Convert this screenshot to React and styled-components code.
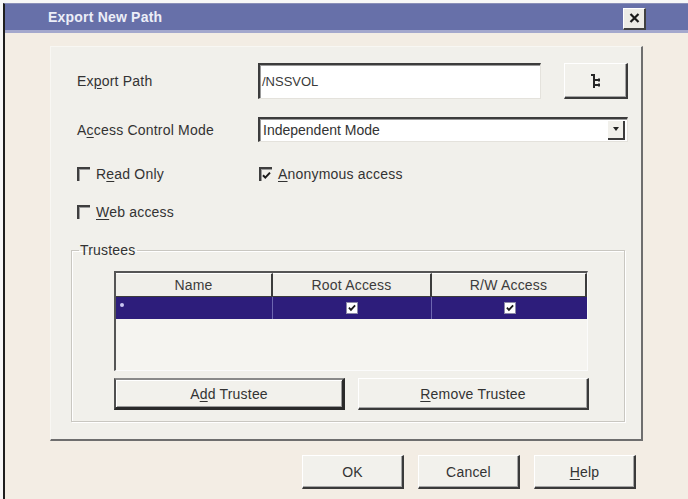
import React from "react";
import styled, { createGlobalStyle } from "styled-components";

const GlobalStyle = createGlobalStyle`
  html, body {
    margin: 0;
    padding: 0;
    background: #ffffff;
  }
  * {
    box-sizing: border-box;
  }
`;

const Screen = styled.div`
  width: 688px;
  height: 499px;
  padding: 3px 0 0 3px;
  background: #f7f7f7;
  font-family: "Liberation Sans", Arial, sans-serif;
  font-size: 14px;
  color: #333333;
  overflow: hidden;
`;

const Window = styled.div`
  height: 100%;
  display: flex;
  flex-direction: column;
  background: #f3ede4;
  border-left: 2px solid #1e1e1e;
  border-top: 1px solid #8a8fb8;
`;

const TitleBar = styled.div`
  height: 29px;
  flex: none;
  display: flex;
  align-items: center;
  justify-content: space-between;
  padding: 0 42px 0 43px;
  background: #6770a9;
  border-bottom: 3px solid #a4a8cd;
`;

const Title = styled.span`
  color: #eceef8;
  font-weight: bold;
  font-size: 14px;
  letter-spacing: 0.2px;
`;

const CloseButton = styled.div`
  width: 23px;
  height: 22px;
  margin-top: 3px;
  display: flex;
  align-items: center;
  justify-content: center;
  background: #ecebe6;
  border-top: 1px solid #ffffff;
  border-left: 1px solid #ffffff;
  border-right: 2px solid #404040;
  border-bottom: 2px solid #404040;
`;

const Body = styled.div`
  flex: 1;
  padding: 13px 0 0 45px;
`;

const Panel = styled.div`
  width: 593px;
  height: 395px;
  padding: 16px 0 0 20px;
  background: #f1f0eb;
  border-top: 1px solid #f8f7f3;
  border-left: 1px solid #f8f7f3;
  border-right: 2px solid #6e6e6e;
  border-bottom: 2px solid #6e6e6e;
`;

const FieldRow = styled.div`
  display: flex;
  align-items: center;
  height: ${({ h }) => h}px;
  margin: ${({ top }) => top}px 0 0 6px;
`;

const Label = styled.div`
  width: 181px;
  flex: none;
  letter-spacing: 0.2px;
`;

const Key = styled.span`
  text-decoration: underline;
  text-underline-offset: 2px;
`;

const Sunken = styled.div`
  height: 100%;
  display: flex;
  align-items: center;
  background: #ffffff;
  border-top: 2px solid #3c3c3c;
  border-left: 2px solid #3c3c3c;
  border-right: 1px solid #e4e2dc;
  border-bottom: 1px solid #e4e2dc;
  box-shadow: inset 1px 1px 0 #9a9a9a;
`;

const TextInput = styled(Sunken)`
  width: 283px;
  padding-left: 2px;
  font-size: 13px;
  color: #3a3a3a;
`;

const Select = styled(Sunken)`
  width: 370px;
  justify-content: space-between;
  padding: 0 2px 0 3px;
`;

const DropArrow = styled.div`
  width: 17px;
  height: 19px;
  display: flex;
  align-items: center;
  justify-content: center;
  background: #f1f0eb;
  border-right: 2px solid #3c3c3c;
  border-bottom: 2px solid #3c3c3c;
  &::after {
    content: "";
    border-left: 3px solid transparent;
    border-right: 3px solid transparent;
    border-top: 4px solid #222;
  }
`;

const Button = styled.button`
  width: ${({ w }) => w}px;
  height: ${({ h }) => h}px;
  margin-left: ${({ gapLeft }) => gapLeft || 0}px;
  flex: none;
  display: flex;
  align-items: center;
  justify-content: center;
  padding: 0;
  font-family: inherit;
  font-size: 14px;
  letter-spacing: 0.2px;
  color: #333333;
  background: #f2f1ec;
  border-top: 1px solid #ffffff;
  border-left: 1px solid #ffffff;
  border-right: 2px solid #3a3a3a;
  border-bottom: 2px solid #3a3a3a;
  box-shadow: inset -1px -1px 0 #a6a6a6;
  ${({ primary }) =>
    primary &&
    `
    border-top: 2px solid #8a8a8a;
    border-left: 2px solid #505050;
    border-right: 3px solid #2a2a2a;
    border-bottom: 3px solid #2a2a2a;
    box-shadow: inset 1px 1px 0 #ffffff, inset -1px -1px 0 #9a9a9a;
  `}
`;

const CheckRow = styled.div`
  display: flex;
  align-items: center;
  height: 20px;
  margin: ${({ top }) => top}px 0 0 6px;
`;

const CheckItem = styled.label`
  display: flex;
  align-items: center;
  gap: 6px;
  width: ${({ w }) => (w ? `${w}px` : "auto")};
  letter-spacing: 0.2px;
`;

const Box = styled.span`
  width: 13px;
  height: 14px;
  flex: none;
  display: flex;
  align-items: center;
  justify-content: center;
  border-top: 2px solid #3e3e3e;
  border-left: 2px solid #3e3e3e;
  box-shadow: inset 1px 1px 0 #9c9c9c;
`;

const Group = styled.fieldset`
  width: 554px;
  height: 180px;
  margin: 20px 0 0 0;
  padding: 0 0 0 42px;
  border: 1px solid #c9c7c1;
  box-shadow: 1px 1px 0 #ffffff, inset 1px 1px 0 #ffffff;
  min-inline-size: 0;
`;

const Legend = styled.legend`
  padding: 0 1px;
  margin-left: -35px;
  letter-spacing: 0.2px;
`;

const Table = styled.div`
  width: 474px;
  height: 100px;
  margin-top: 13px;
  background: #f5f4f0;
  border-top: 2px solid #555;
  border-left: 2px solid #555;
  border-right: 1px solid #fbfbfb;
  border-bottom: 1px solid #fbfbfb;
`;

const Grid = styled.div`
  display: grid;
  grid-template-columns: 157px 159px 1fr;
`;

const HeadCell = styled.div`
  height: 24px;
  display: flex;
  align-items: center;
  justify-content: center;
  background: #f0efea;
  border-top: 1px solid #ffffff;
  border-bottom: 1px solid #3c3c3c;
  border-right: 2px solid #3c3c3c;
  color: #3c3c3c;
  letter-spacing: 0.2px;
  &:last-child {
    border-right: none;
  }
`;

const RowCell = styled.div`
  height: 22px;
  display: flex;
  align-items: center;
  justify-content: ${({ left }) => (left ? "flex-start" : "center")};
  padding-left: ${({ left }) => (left ? "4px" : "0")};
  background: #2d1d7b;
  border-right: 1px solid #6d66b0;
  &:last-child {
    border-right: none;
  }
`;

const Marker = styled.span`
  width: 4px;
  height: 4px;
  border-radius: 50%;
  background: #c9c6f0;
  margin-top: -6px;
`;

const CellBox = styled.span`
  width: 12px;
  height: 12px;
  display: flex;
  align-items: center;
  justify-content: center;
  background: #ffffff;
  border: 1px solid #8d8aa8;
`;

const ButtonRow = styled.div`
  display: flex;
  gap: 13px;
  margin-top: 7px;
`;

const Footer = styled.div`
  width: 593px;
  display: flex;
  justify-content: flex-end;
  gap: 14px;
  padding-right: 7px;
  margin-top: 14px;
`;

const Check = ({ size = 9 }) => (
  <svg width={size} height={size} viewBox="0 0 9 9">
    <path d="M1 4.2 L3.3 6.6 L8 1.6" fill="none" stroke="#1a1a1a" strokeWidth="2" />
  </svg>
);

const CloseGlyph = () => (
  <svg width="11" height="10" viewBox="0 0 11 10">
    <path d="M1.5 1 L9.5 9 M9.5 1 L1.5 9" stroke="#1a1a1a" strokeWidth="2.2" />
  </svg>
);

// tree glyph on the browse button: trunk with a hook on top and two branches
const BrowseGlyph = () => (
  <svg width="14" height="18" viewBox="0 0 14 18">
    <path
      d="M5 2 V16 M2 3 H5 M5 8 H11 M5 13 H11 M10 6.5 V9.5 M10 11.5 V14.5"
      fill="none"
      stroke="#262626"
      strokeWidth="2"
    />
  </svg>
);

export default function App() {
  return (
    <>
      <GlobalStyle />
      <Screen>
        <Window>
          <TitleBar>
            <Title>Export New Path</Title>
            <CloseButton>
              <CloseGlyph />
            </CloseButton>
          </TitleBar>
          <Body>
            <Panel>
              <FieldRow h={36} top={0}>
                <Label>
                  Ex<Key>p</Key>ort Path
                </Label>
                <TextInput>/NSSVOL</TextInput>
                <Button w={64} h={36} gapLeft={23}>
                  <BrowseGlyph />
                </Button>
              </FieldRow>
              <FieldRow h={25} top={18}>
                <Label>
                  A<Key>c</Key>cess Control Mode
                </Label>
                <Select>
                  <span>Independent Mode</span>
                  <DropArrow />
                </Select>
              </FieldRow>
              <CheckRow top={22}>
                <CheckItem w={182}>
                  <Box />
                  <span>
                    R<Key>e</Key>ad Only
                  </span>
                </CheckItem>
                <CheckItem>
                  <Box>
                    <Check />
                  </Box>
                  <span>
                    <Key>A</Key>nonymous access
                  </span>
                </CheckItem>
              </CheckRow>
              <CheckRow top={18}>
                <CheckItem>
                  <Box />
                  <span>
                    <Key>W</Key>eb access
                  </span>
                </CheckItem>
              </CheckRow>
              <Group>
                <Legend>Trustees</Legend>
                <Table>
                  <Grid>
                    <HeadCell>Name</HeadCell>
                    <HeadCell>Root Access</HeadCell>
                    <HeadCell>R/W Access</HeadCell>
                    <RowCell left>
                      <Marker />
                    </RowCell>
                    <RowCell>
                      <CellBox>
                        <Check size={8} />
                      </CellBox>
                    </RowCell>
                    <RowCell>
                      <CellBox>
                        <Check size={8} />
                      </CellBox>
                    </RowCell>
                  </Grid>
                </Table>
                <ButtonRow>
                  <Button w={231} h={32} primary>
                    <span>
                      A<Key>d</Key>d Trustee
                    </span>
                  </Button>
                  <Button w={231} h={32}>
                    <span>
                      <Key>R</Key>emove Trustee
                    </span>
                  </Button>
                </ButtonRow>
              </Group>
            </Panel>
            <Footer>
              <Button w={102} h={34}>OK</Button>
              <Button w={102} h={34}>Cancel</Button>
              <Button w={102} h={34}>
                <span>
                  <Key>H</Key>elp
                </span>
              </Button>
            </Footer>
          </Body>
        </Window>
      </Screen>
    </>
  );
}
